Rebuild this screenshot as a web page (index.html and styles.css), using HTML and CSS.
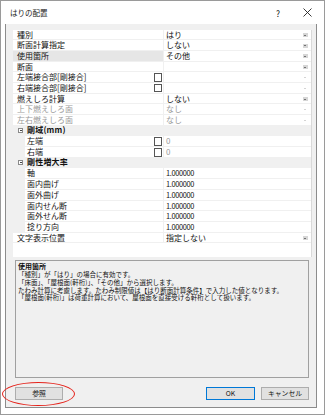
FILE: index.html
```html
<!DOCTYPE html>
<html lang="ja">
<head>
<meta charset="utf-8">
<title>はりの配置</title>
<link rel="stylesheet" href="styles.css">
</head>
<body>
<div class="window">
  <div class="titlebar">
    <span class="title">はりの配置</span>
    <span class="help">?</span>
    <span class="close"><svg width="9" height="9" viewBox="0 0 9 9"><path d="M0.5 0.5L8.5 8.5M8.5 0.5L0.5 8.5" stroke="#222" stroke-width="0.9" fill="none"/></svg></span>
  </div>
  <div class="client">
    <div class="grid">
      <div class="rows">
        <div class="row"><div class="lab">種別</div><div class="val">はり<i class="dd"></i></div></div>
        <div class="row"><div class="lab">断面計算指定</div><div class="val">しない<i class="dd"></i></div></div>
        <div class="row"><div class="lab sel">使用箇所</div><div class="val">その他<i class="dd"></i></div></div>
        <div class="row"><div class="lab">断面</div><div class="val"><i class="dd"></i></div></div>
        <div class="row"><div class="lab">左端接合部[剛接合]<b class="cb"></b></div><div class="val"><i class="dd off"></i></div></div>
        <div class="row"><div class="lab">右端接合部[剛接合]<b class="cb"></b></div><div class="val"><i class="dd off"></i></div></div>
        <div class="row"><div class="lab">燃えしろ計算</div><div class="val">しない<i class="dd"></i></div></div>
        <div class="row dis"><div class="lab">上下燃えしろ面</div><div class="val">なし<i class="dd off"></i></div></div>
        <div class="row dis"><div class="lab">左右燃えしろ面</div><div class="val">なし<i class="dd off"></i></div></div>
        <div class="row grp"><span class="tog"></span>剛域(mm)</div>
        <div class="row child"><div class="lab">左端<b class="cb"></b></div><div class="val gray">0</div></div>
        <div class="row child"><div class="lab">右端<b class="cb"></b></div><div class="val gray">0</div></div>
        <div class="row grp"><span class="tog"></span>剛性増大率</div>
        <div class="row child"><div class="lab">軸</div><div class="val num">1.000000</div></div>
        <div class="row child"><div class="lab">面内曲げ</div><div class="val num">1.000000</div></div>
        <div class="row child"><div class="lab">面外曲げ</div><div class="val num">1.000000</div></div>
        <div class="row child"><div class="lab">面内せん断</div><div class="val num">1.000000</div></div>
        <div class="row child"><div class="lab">面外せん断</div><div class="val num">1.000000</div></div>
        <div class="row child"><div class="lab">捻り方向</div><div class="val num">1.000000</div></div>
        <div class="row"><div class="lab">文字表示位置</div><div class="val">指定しない<i class="dd"></i></div></div>
      </div>
      <div class="scroll"></div>
    </div>
    <div class="desc">
      <div class="desc-title">使用箇所</div>
      <p>「種別」が「はり」の場合に有効です。</p>
      <p>「床面」、「屋根面(軒桁)」、「その他」から選択します。</p>
      <p>たわみ計算に考慮します。たわみ制限値は【はり断面計算条件】で入力した値となります。</p>
      <p>「屋根面(軒桁)」は荷重計算において、屋根面を直接受ける軒桁として扱います。</p>
    </div>
    <div class="buttons">
      <button class="btn ref">参照</button>
      <span class="spacer"></span>
      <button class="btn ok">OK</button>
      <button class="btn">キャンセル</button>
    </div>
  </div>
  <div class="mark"></div>
</div>
</body>
</html>
```

FILE: styles.css
```css
* { box-sizing: border-box; }
html, body { margin: 0; padding: 0; background: #fff; }
body {
  width: 325px; height: 415px; overflow: hidden;
  font-family: "Noto Sans CJK JP", "Noto Sans", sans-serif;
  color: #111;
}
.window {
  position: relative;
  width: 325px; height: 415px;
  border: 1px solid #9a9a9a;
  background: #fff;
  display: flex; flex-direction: column;
}
.titlebar {
  height: 23px; display: flex; align-items: center;
  padding-left: 9px; font-size: 7.5px; color: #222;
}
.title { flex: 1; }
.help { width: 10px; text-align: center; font-size: 8.5px; margin-right: 20px; }
.close { width: 10px; margin-right: 11px; display: flex; align-items: center; }
.client {
  margin: 0 7px 6px 4px;
  flex: 1;
  background: #f0f0f0;
  border: 1px solid #8c8c8c; border-top: none;
  padding: 5.5px 0 7px 7px;
  display: flex; flex-direction: column;
}
.grid { height: 227px; display: flex; background: #fff; }
.rows { width: 298px; }
.scroll { flex: 1; background: #f0f0f0; border-left: 1px solid #d9d9d9; }
.row {
  height: 10.7px; display: flex; font-size: 8px; line-height: 10.7px;
  border-bottom: 1px solid #f0f0f0;
}
.lab {
  width: 150px; padding-left: 4px; position: relative; white-space: nowrap;
}
.lab.sel { background: #e6e6e6; }
.val {
  flex: 1; padding-left: 2px; position: relative;
  border-left: 1px solid #f0f0f0;
}
.dis .lab, .dis .val, .val.gray { color: #9a9a9a; }
.num { font-size: 7.4px; letter-spacing: -0.35px; }
.child { background: linear-gradient(to right, #f0f0f0 12px, transparent 12px); }
.child .lab { padding-left: 14px; }
.grp {
  background: #f0f0f0; font-weight: bold; font-size: 8px;
  align-items: center; padding-left: 5px; letter-spacing: 0.2px;
}
.tog {
  width: 5px; height: 5px; border: 1px solid #8a8a8a; margin-right: 4px;
  position: relative; background: #fff;
}
.tog::after {
  content: ""; position: absolute; left: 0.5px; top: 1px; width: 2px; height: 1px; background: #444;
}
.cb {
  position: absolute; right: 1px; top: 1px;
  width: 8.5px; height: 8.5px; border: 1px solid #555; background: #fff;
}
.dd {
  position: absolute; right: 3px; top: 3.5px;
  width: 5px; height: 4px; background: #d6d6d6;
}
.dd::after {
  content: ""; position: absolute; left: 1px; top: 1.5px;
  border-left: 1.5px solid transparent; border-right: 1.5px solid transparent;
  border-top: 1.5px solid #111;
}
.dd.off { background: transparent; }
.dd.off::after { border-top-color: #aaa; }
.desc {
  margin: 3.5px 7px 0 2px; height: 118px;
  border: 1px solid #a0a0a0; background: #f0f0f0;
  padding: 1px 2px; font-size: 6.5px; line-height: 7.8px; color: #111;
}
.desc-title { font-weight: bold; font-size: 7px; line-height: 9px; }
.desc p { margin: 0; white-space: nowrap; }
.buttons { display: flex; margin: 9px 7px 0 2px; height: 13px; }
.spacer { flex: 1; }
.btn {
  font-family: inherit; font-size: 6.8px; color: #111;
  height: 13px; width: 48px; padding: 0;
  background: #e1e1e1; border: 1px solid #adadad; line-height: 11px;
}
.btn.ok { width: 49px; border-color: #0078d7; margin-right: 6px; }
.mark {
  position: absolute; left: 1px; top: 381px; width: 73px; height: 24px;
  border: 1.6px solid #e5231b; border-radius: 50%;
}
```
